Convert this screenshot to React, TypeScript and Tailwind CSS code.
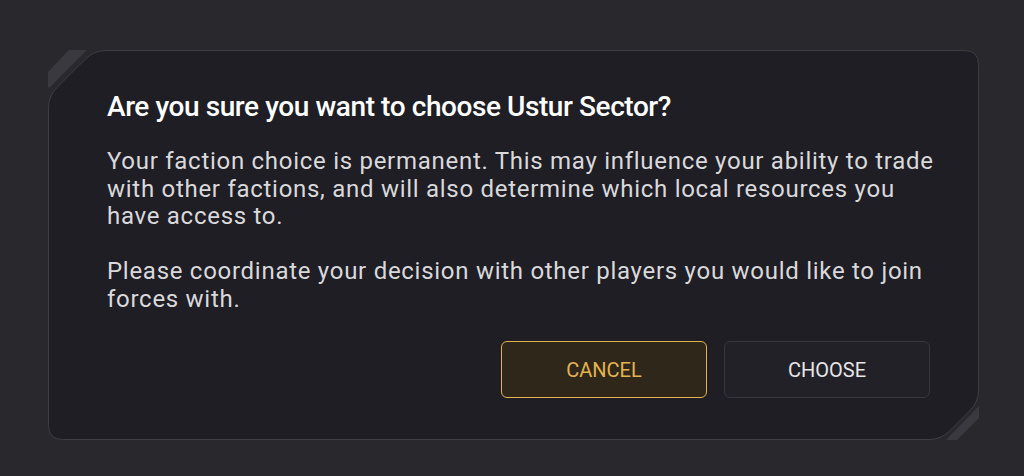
import React from "react";

const W = 931;
const H = 390;

type Pt = [number, number];

// rounded polygon path, r per vertex
const roundedPath = (pts: Pt[], radii: number[]) => {
  const n = pts.length;
  let d = "";
  pts.forEach((v, i) => {
    const p = pts[(i - 1 + n) % n];
    const nx = pts[(i + 1) % n];
    const r = radii[i];
    const toP = [p[0] - v[0], p[1] - v[1]];
    const toN = [nx[0] - v[0], nx[1] - v[1]];
    const lp = Math.hypot(toP[0], toP[1]);
    const ln = Math.hypot(toN[0], toN[1]);
    const a = [v[0] + (toP[0] / lp) * r, v[1] + (toP[1] / lp) * r];
    const b = [v[0] + (toN[0] / ln) * r, v[1] + (toN[1] / ln) * r];
    d += `${i === 0 ? "M" : "L"}${a[0]},${a[1]} Q${v[0]},${v[1]} ${b[0]},${b[1]} `;
  });
  return d + "Z";
};

const panelPath = roundedPath(
  [
    [0.5, 46],
    [46, 0.5],
    [W - 0.5, 0.5],
    [W - 0.5, H - 38],
    [W - 38, H - 0.5],
    [0.5, H - 0.5],
  ],
  [12, 12, 14, 12, 12, 14]
);

const PanelFrame = () => (
  <svg
    className="absolute inset-0 pointer-events-none"
    width={W}
    height={H}
    viewBox={`0 0 ${W} ${H}`}
  >
    <path d="M21,0 L39,0 L2,37 Q0,39 0,36 L0,22 Z" fill="#3a3940" />
    <path
      d={`M${W},${H - 34} L${W},${H - 22} L${W - 22},${H} L${W - 33},${H} Z`}
      fill="#3a3940"
    />
    <path d={panelPath} fill="#1f1e24" stroke="#3e3d44" strokeWidth="1" />
  </svg>
);

const btnBase =
  "w-[206px] h-[57px] rounded-[6px] border text-[20px] tracking-normal uppercase flex items-center justify-center";

export default function App() {
  return (
    <div
      className="w-[1024px] h-[476px] bg-[#29282d] pt-[50px] pl-[48px]"
      style={{ fontFamily: "Roboto, 'Noto Sans', sans-serif" }}
    >
      <div className="relative w-[931px] h-[390px]">
        <PanelFrame />
        <div className="relative flex flex-col h-full pl-[59px] pr-[49px] pt-[40px]">
          <h2 className="text-[28px] leading-[34px] font-medium text-white tracking-[-0.015em]">
            Are you sure you want to choose Ustur Sector?
          </h2>
          <div className="mt-[24px] w-[840px] text-[24px] leading-[27.5px] text-[#d9d9dc] tracking-[0.03em] flex flex-col gap-[27.5px]">
            <p>
              Your faction choice is permanent. This may influence your ability to trade
              with other factions, and will also determine which local resources you
              have access to.
            </p>
            <p>
              Please coordinate your decision with other players you would like to join
              forces with.
            </p>
          </div>
          <div className="mt-auto mb-[42px] flex justify-end gap-[17px]">
            <button className={`${btnBase} bg-[#2f2719] border-[#e3b352] text-[#e3b352]`}>
              Cancel
            </button>
            <button className={`${btnBase} bg-[#222127] border-[#38373d] text-[#e6e6e8]`}>
              Choose
            </button>
          </div>
        </div>
      </div>
    </div>
  );
}
